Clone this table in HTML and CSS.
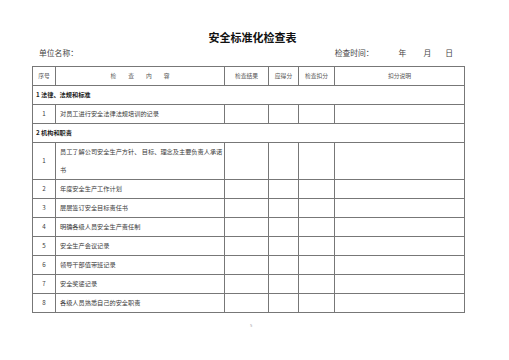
FILE: index.html
```html
<!DOCTYPE html>
<html lang="zh-CN">
<head>
<meta charset="utf-8">
<title>安全标准化检查表</title>
<link rel="stylesheet" href="styles.css">
</head>
<body>
<div class="page">
  <h1 class="title">安全标准化检查表</h1>
  <div class="info">
    <span class="unit">单位名称：</span>
    <span class="date">
      <span class="date-label">检查时间：</span>
      <span class="ymd y">年</span>
      <span class="ymd m">月</span>
      <span class="ymd d">日</span>
    </span>
  </div>
  <table class="sheet">
    <colgroup>
      <col class="c-no"><col class="c-item"><col class="c-res"><col class="c-score"><col class="c-ded"><col class="c-note">
    </colgroup>
    <thead>
      <tr>
        <th>序号</th>
        <th class="spaced"><span>检</span><span>查</span><span>内</span><span>容</span></th>
        <th>检查结果</th>
        <th>应得分</th>
        <th>检查扣分</th>
        <th>扣分说明</th>
      </tr>
    </thead>
    <tbody>
      <tr class="section"><td colspan="6">1 法律、法规和标准</td></tr>
      <tr><td class="no">1</td><td class="item">对员工进行安全法律法规培训的记录</td><td></td><td></td><td></td><td></td></tr>
      <tr class="section"><td colspan="6">2 机构和职责</td></tr>
      <tr><td class="no">1</td><td class="item">员工了解公司安全生产方针、 目标、理念及主要负责人承诺书</td><td></td><td></td><td></td><td></td></tr>
      <tr><td class="no">2</td><td class="item">年度安全生产工作计划</td><td></td><td></td><td></td><td></td></tr>
      <tr><td class="no">3</td><td class="item">层层签订安全目标责任书</td><td></td><td></td><td></td><td></td></tr>
      <tr><td class="no">4</td><td class="item">明确各级人员安全生产责任制</td><td></td><td></td><td></td><td></td></tr>
      <tr><td class="no">5</td><td class="item">安全生产会议记录</td><td></td><td></td><td></td><td></td></tr>
      <tr><td class="no">6</td><td class="item">领导干部值带班记录</td><td></td><td></td><td></td><td></td></tr>
      <tr><td class="no">7</td><td class="item">安全奖惩记录</td><td></td><td></td><td></td><td></td></tr>
      <tr><td class="no">8</td><td class="item">各级人员熟悉自己的安全职责</td><td></td><td></td><td></td><td></td></tr>
    </tbody>
  </table>
  <div class="pageno">5</div>
</div>
</body>
</html>
```
FILE: styles.css
```css
html, body {
  margin: 0;
  padding: 0;
  background: #ffffff;
}
body {
  font-family: "Noto Sans CJK SC", "Noto Sans", "Liberation Sans", sans-serif;
  color: #3a3a3a;
}
.page {
  width: 509px;
  padding-top: 30px;
}
.title {
  margin: 0;
  text-align: center;
  font-size: 11px;
  line-height: 14px;
  font-weight: 700;
  color: #111;
  padding-right: 4px;
}
.info {
  display: flex;
  justify-content: space-between;
  margin-top: 4px;
  padding-left: 39px;
  padding-right: 56px;
  font-size: 7.8px;
  line-height: 10px;
  color: #444;
}
.date {
  display: flex;
}
.ymd.y { margin-left: 25px; }
.ymd.m { margin-left: 17px; }
.ymd.d { margin-left: 14px; }
.sheet {
  margin-top: 8px;
  margin-left: 32px;
  width: 432px;
  border-collapse: collapse;
  table-layout: fixed;
  font-size: 6.2px;
  line-height: 18px;
}
.c-no { width: 23px; }
.c-item { width: 169px; }
.c-res { width: 44px; }
.c-score { width: 30px; }
.c-ded { width: 36px; }
.c-note { width: 130px; }
.sheet th, .sheet td {
  border: 1px solid #777;
  padding: 0;
  height: 18px;
  vertical-align: middle;
}
.sheet th {
  font-weight: 400;
  text-align: center;
  font-size: 5.8px;
  color: #555;
}
.sheet th.spaced span {
  margin: 0 6px;
}
.sheet td.no {
  text-align: center;
}
.sheet td.item {
  padding-left: 4px;
  padding-right: 0;
}
.sheet tr.section td {
  font-weight: 700;
  padding-left: 3px;
  color: #222;
}
.pageno {
  margin-top: 9px;
  padding-left: 250px;
  font-size: 4px;
  line-height: 6px;
  color: #999;
}
```
